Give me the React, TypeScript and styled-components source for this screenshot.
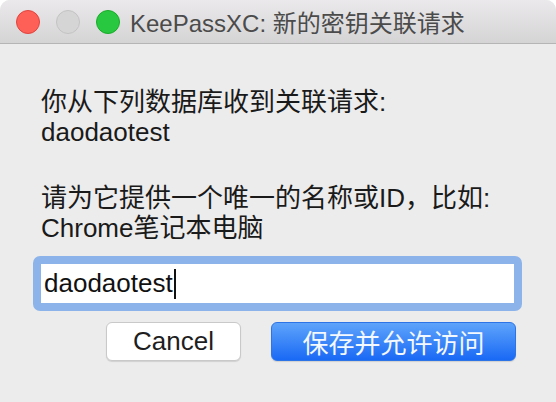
import React from "react";
import styled, { createGlobalStyle } from "styled-components";

const Global = createGlobalStyle`
  html, body { margin: 0; padding: 0; background: #ffffff; }
  body { font-family: "Liberation Sans", "Noto Sans CJK SC", sans-serif; }
  * { box-sizing: border-box; }
`;

const Window = styled.div`
  width: 556px;
  height: 402px;
  background: #ececec;
  border-radius: 10px 10px 0 0;
  overflow: hidden;
  display: flex;
  flex-direction: column;
`;

const TitleBar = styled.div`
  height: 44px;
  flex: none;
  display: flex;
  align-items: center;
  padding-left: 16px;
  background: linear-gradient(#ebe9eb, #d5d4d5);
  border-bottom: 1px solid #b5b5b5;
`;

const Lights = styled.div`
  display: flex;
  gap: 16px;
`;

const Light = styled.span<{ $c: string; $b: string }>`
  width: 24px;
  height: 24px;
  border-radius: 50%;
  background: ${(p) => p.$c};
  border: 1px solid ${(p) => p.$b};
`;

const Title = styled.div`
  margin-left: 10px;
  font-size: 24px;
  color: #4b4b4b;
  font-family: "Liberation Sans", "Noto Sans CJK SC", sans-serif;
`;

const Body = styled.div`
  flex: 1;
  display: flex;
  flex-direction: column;
  padding: 43px 41px 0 41px;
`;

const Message = styled.p<{ $gap: number }>`
  margin: 0 0 ${(p) => p.$gap}px 0;
  font-size: 26px;
  line-height: 30px;
  color: #1a1a1a;
`;

const Ring = styled.div`
  margin: 0 -7px 0 -8px;
  padding: 8px;
  border-radius: 7px;
  background: #8cb4ea;
`;

const Input = styled.div`
  height: 39px;
  background: #fff;
  display: flex;
  align-items: center;
  padding-left: 3px;
  font-size: 26px;
  color: #111;
`;

const Caret = styled.span`
  display: inline-block;
  width: 2px;
  height: 30px;
  background: #111;
  margin-left: 1px;
`;

const Buttons = styled.div`
  display: flex;
  justify-content: flex-end;
  gap: 30px;
  margin: 11px -1px 0 0;
`;

const Button = styled.div<{ $primary?: boolean }>`
  height: 39px;
  width: ${(p) => (p.$primary ? "245px" : "135px")};
  border-radius: 6px;
  display: flex;
  align-items: center;
  justify-content: center;
  font-size: 26px;
  color: ${(p) => (p.$primary ? "#f4f8ff" : "#1e1e1e")};
  background: ${(p) =>
    p.$primary ? "linear-gradient(#5ea4fb, #1a69f5)" : "#ffffff"};
  border: 1px solid ${(p) => (p.$primary ? "#2d74e6" : "#c9c9c9")};
  box-shadow: 0 1px 1px rgba(0, 0, 0, 0.12);
`;

export default function App() {
  return (
    <>
      <Global />
      <Window>
        <TitleBar>
          <Lights>
            <Light $c="#fe5f57" $b="#e0443e" />
            <Light $c="#d5d5d5" $b="#c3c3c3" />
            <Light $c="#28c840" $b="#1aab29" />
          </Lights>
          <Title>KeePassXC: 新的密钥关联请求</Title>
        </TitleBar>
        <Body>
          <Message $gap={36}>
            你从下列数据库收到关联请求:
            <br />
            daodaotest
          </Message>
          <Message $gap={13}>
            请为它提供一个唯一的名称或ID，比如:
            <br />
            Chrome笔记本电脑
          </Message>
          <Ring>
            <Input>
              daodaotest
              <Caret />
            </Input>
          </Ring>
          <Buttons>
            <Button>Cancel</Button>
            <Button $primary>保存并允许访问</Button>
          </Buttons>
        </Body>
      </Window>
    </>
  );
}
